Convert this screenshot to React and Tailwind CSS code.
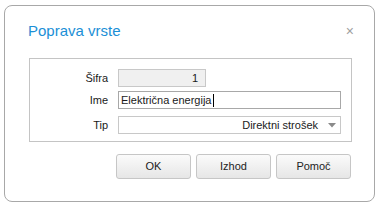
export default function App() {
  const font = { fontFamily: '"Liberation Sans", Arial, sans-serif' };
  return (
    <div className="w-[379px] h-[204px] bg-white overflow-hidden" style={font}>
      <div className="ml-[4px] mt-[5px] w-[371px] h-[197px] box-border border border-[#a8a8a8] rounded-[8px] bg-white">
        <div className="flex items-center justify-between pl-[23px] pr-[20px] pt-[16px] h-[18px] box-content">
          <span className="text-[15px] leading-[18px] text-[#1b8fd6]">Poprava vrste</span>
          <span className="text-[14px] leading-[18px] text-[#a0a0a0]">×</span>
        </div>
        <div className="ml-[24px] mt-[18px] w-[323px] h-[84px] box-border border border-[#c4c4c4] pt-[10px] text-[11px] text-[#1a1a1a]">
          <div className="flex items-center h-[18px]">
            <span className="w-[78px] text-right pr-[0px]">Šifra</span>
            <div className="ml-[10px] w-[88px] h-[18px] box-border border border-[#c8c8c8] bg-[#f0f0f0] flex items-center justify-end pr-[7px]">1</div>
          </div>
          <div className="flex items-center h-[18px] mt-[4px]">
            <span className="w-[78px] text-right">Ime</span>
            <div className="ml-[10px] w-[223px] h-[18px] box-border border border-[#a8a8a8] bg-white flex items-center pl-[2px]">
              <span>Električna energija</span>
              <span className="w-[1px] h-[13px] bg-black ml-[1px]"></span>
            </div>
          </div>
          <div className="flex items-center h-[18px] mt-[7px]">
            <span className="w-[78px] text-right">Tip</span>
            <div className="ml-[10px] w-[223px] h-[18px] box-border border border-[#c8c8c8] bg-white flex items-center justify-end pr-[4px]">
              <span>Direktni strošek</span>
              <svg width="8" height="5" viewBox="0 0 8 5" className="ml-[10px]">
                <polygon points="0,0 8,0 4,4.5" fill="#8a8a8a" />
              </svg>
            </div>
          </div>
        </div>
        <div className="flex ml-[111px] mt-[12px] gap-[5px] text-[11px] text-[#222]">
          {["OK", "Izhod", "Pomoč"].map((t) => (
            <div key={t} className="w-[75px] h-[25px] box-border border border-[#c6c6c6] rounded-[3px] bg-gradient-to-b from-[#fbfbfb] to-[#e6e6e6] flex items-center justify-center">
              {t}
            </div>
          ))}
        </div>
      </div>
    </div>
  );
}
